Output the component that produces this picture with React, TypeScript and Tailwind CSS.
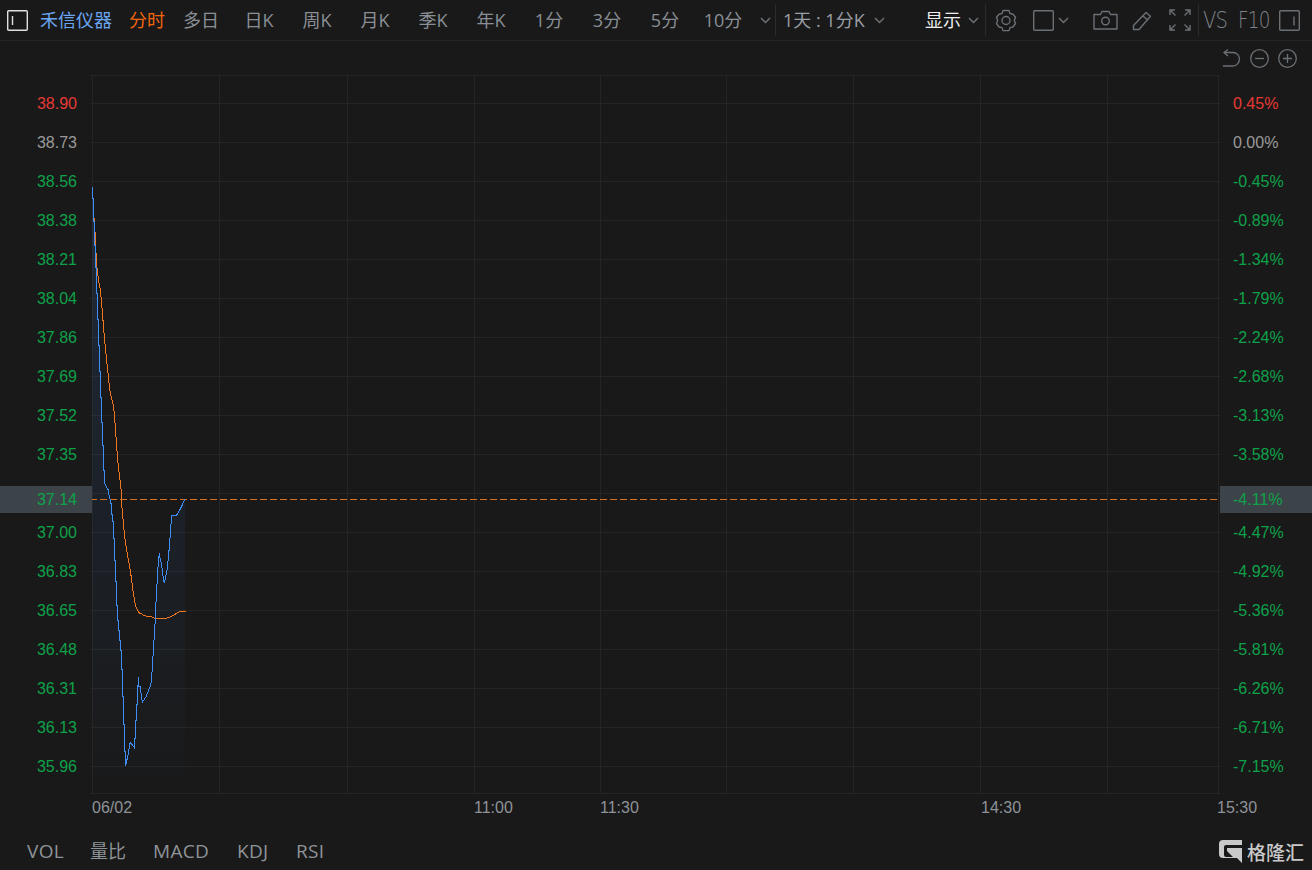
const LEFT: [string, string][] = [
  ['38.90', 'text-[#e53935]'], ['38.73', 'text-[#9a9a9a]'], ['38.56', 'text-[#0fa14a]'], ['38.38', 'text-[#0fa14a]'],
  ['38.21', 'text-[#0fa14a]'], ['38.04', 'text-[#0fa14a]'], ['37.86', 'text-[#0fa14a]'], ['37.69', 'text-[#0fa14a]'],
  ['37.52', 'text-[#0fa14a]'], ['37.35', 'text-[#0fa14a]'], ['', ''], ['37.00', 'text-[#0fa14a]'],
  ['36.83', 'text-[#0fa14a]'], ['36.65', 'text-[#0fa14a]'], ['36.48', 'text-[#0fa14a]'], ['36.31', 'text-[#0fa14a]'],
  ['36.13', 'text-[#0fa14a]'], ['35.96', 'text-[#0fa14a]'],
];
const RIGHT: [string, string][] = [
  ['0.45%', 'text-[#e53935]'], ['0.00%', 'text-[#9a9a9a]'], ['-0.45%', 'text-[#0fa14a]'], ['-0.89%', 'text-[#0fa14a]'],
  ['-1.34%', 'text-[#0fa14a]'], ['-1.79%', 'text-[#0fa14a]'], ['-2.24%', 'text-[#0fa14a]'], ['-2.68%', 'text-[#0fa14a]'],
  ['-3.13%', 'text-[#0fa14a]'], ['-3.58%', 'text-[#0fa14a]'], ['', ''], ['-4.47%', 'text-[#0fa14a]'],
  ['-4.92%', 'text-[#0fa14a]'], ['-5.36%', 'text-[#0fa14a]'], ['-5.81%', 'text-[#0fa14a]'], ['-6.26%', 'text-[#0fa14a]'],
  ['-6.71%', 'text-[#0fa14a]'], ['-7.15%', 'text-[#0fa14a]'],
];
const TABS = ['多日', '日K', '周K', '月K', '季K', '年K', '1分', '3分', '5分', '10分'];
const VX = [92, 219, 347, 474, 600, 726, 853, 980, 1107, 1218];
const HY = [75, 103, 142, 181, 220, 259, 298, 337, 376, 415, 454, 493, 532, 571, 610, 649, 688, 727, 766, 793];

const blueTop = [[37,52],[37,85],[40,85],[40,155],[43,155],[43,225],[46,225],[46,293],[49,293],[49,370],[52,370],[52,447],[55,447],[55,527],[58,527],[58,605],[61,605],[61,683],[64,683],[64,756],[67,756],[67,827],[70,827],[70,900],[73,900],[74,940],[79,950],[85,960],[88,980]];
const blueBot = [[91,30],[94,45],[94,72],[97,72],[97,95],[100,95],[100,145],[103,145],[103,210],[106,210],[106,275],[109,275],[109,345],[112,345],[112,390],[115,390],[115,420],[118,420],[118,450],[121,450],[121,480],[124,480],[124,537],[127,537],[127,620],[130,620],[130,702],[133,702],[133,785],[136,785],[137,828],[139,818],[142,805],[145,790],[148,770],[151,757],[157,765],[163,773],[164,745],[167,745],[167,692],[170,692],[170,642],[172,642],[172,587],[175,587],[175,562],[177,590],[181,590],[183,610],[187,637],[192,630],[198,620],[204,605],[210,590],[213,580],[215,560],[218,513],[221,465],[224,418],[226,385],[229,318],[232,267],[235,215],[238,190],[240,205],[244,220],[247,240],[250,265],[253,280],[256,265],[259,250],[262,235],[265,205],[268,172],[271,132],[275,75],[290,75],[296,65],[302,55],[308,42],[315,28]];
const orangeTop = [[40,145],[43,145],[46,205],[49,265],[52,305],[55,325],[58,343],[61,360],[64,388],[67,425],[70,462],[73,498],[76,530],[79,560],[82,590],[85,618],[88,648],[91,670],[94,682],[97,693],[100,705],[103,730],[106,770],[109,812],[112,855],[115,888],[118,912],[121,938],[124,963]];
const orangeBot = [[124,28],[127,65],[130,95],[133,130],[136,155],[139,175],[142,190],[145,208],[148,225],[151,243],[154,262],[157,288],[160,310],[163,327],[166,345],[169,352],[175,365],[180,370],[185,372],[190,375],[198,378],[215,380],[222,384],[260,384],[270,381],[280,376],[290,370],[300,365],[318,364]];
const conv = (a: number[][], oy: number) => a.map(([x, y]) => [80 + x / 3, oy + y / 3]);
const blue = [...conv(blueTop, 170), ...conv(blueBot, 490)];
const orange = [...conv(orangeTop, 170), ...conv(orangeBot, 490)];
const str = (p: number[][]) => p.map(([x, y]) => `${x.toFixed(1)},${y.toFixed(1)}`).join(' ');

function Chev({ cls = '' }: { cls?: string }) {
  return (
    <svg width="11" height="7" viewBox="0 0 11 7" fill="none" stroke="#6b7075" strokeWidth="1.5" className={`shrink-0 ${cls}`}>
      <path d="M1 1l4.5 4.500L10 1" />
    </svg>
  );
}
function Panel({ left }: { left: boolean }) {
  return (
    <svg width="21" height="21" viewBox="0 0 21 21" fill="none" stroke={left ? '#e0e0e0' : '#6b7075'} strokeWidth="1.4" className="shrink-0">
      <rect x="0.7" y="0.7" width="19.600" height="19.600" rx="1" />
      <path d={left ? 'M5.500 6v9' : 'M15 6.500v9'} />
    </svg>
  );
}

export default function App() {
  return (
    <div className="w-[1312px] h-[870px] bg-[#191919] flex flex-col overflow-hidden font-['Liberation_Sans','Noto_Sans_CJK_SC',sans-serif]">
      <header className="h-[41px] shrink-0 border-b border-[#252525] flex items-center pl-[7px] text-[18px] text-[#8a8f96] font-['Open_Sans','Noto_Sans_CJK_SC',sans-serif]">
        <Panel left />
        <span className="ml-[12px] pt-[1px] w-[73px] shrink-0 whitespace-nowrap text-[#6aa5f0]">禾信仪器</span>
        <span className="ml-[16px] pt-[1px] w-[36px] shrink-0 whitespace-nowrap text-[#f0660f]">分时</span>
        <div className="ml-[7px] pt-[1px] flex items-center shrink-0">
          {TABS.map((t) => (
            <span key={t} className="whitespace-nowrap w-[58px] text-center">{t}</span>
          ))}
        </div>
        <Chev cls="ml-[8px]" />
        <div className="w-px h-[32px] shrink-0 bg-[#2c2c2c] ml-[4px]" />
        <span className="ml-[7px] pt-[1px] w-[83px] shrink-0 whitespace-nowrap text-[#9a9fa5]">1天 : 1分K</span>
        <Chev cls="ml-[8px]" />
        <span className="ml-[40px] pt-[1px] w-[37px] shrink-0 whitespace-nowrap text-[#ededed]">显示</span>
        <Chev cls="ml-[6px]" />
        <div className="w-px h-[32px] shrink-0 bg-[#2c2c2c] ml-[6px]" />
        <svg className="ml-[9px] shrink-0" width="22" height="23" viewBox="0 0 22 23" fill="none" stroke="#6b7075" strokeWidth="1.4">
          <path d="M8 1.500h6l1 3 3 .7 2.500 3-1.200 3.300 1.200 3-2.500 3.500-3 .6-1 3H8l-1-3-3-.6-2.500-3.500 1.200-3-1.200-3.300 2.500-3 3-.7z" strokeLinejoin="round" />
          <circle cx="11" cy="11.500" r="4" />
        </svg>
        <svg className="ml-[16px] shrink-0" width="21" height="21" viewBox="0 0 21 21" fill="none" stroke="#6b7075" strokeWidth="1.4">
          <rect x="0.7" y="0.7" width="19.600" height="19.600" rx="1" />
        </svg>
        <Chev cls="ml-[4px]" />
        <svg className="ml-[24px] shrink-0" width="25" height="20" viewBox="0 0 25 20" fill="none" stroke="#6b7075" strokeWidth="1.4">
          <path d="M1 4.500h6.500l1.500-3h7l1.500 3H24v14.500H1z" strokeLinejoin="round" />
          <circle cx="12.500" cy="11" r="3.800" />
        </svg>
        <svg className="ml-[14px] shrink-0" width="21" height="21" viewBox="0 0 21 21" fill="none" stroke="#6b7075" strokeWidth="1.4">
          <path d="M1.500 15.500L14 2.500l4.500 3.800L7 19.500l-5.500 0z" strokeLinejoin="round" />
          <path d="M11 6l5 4.300" />
        </svg>
        <svg className="ml-[16px] shrink-0" width="22" height="22" viewBox="0 0 22 22" fill="none" stroke="#6b7075" strokeWidth="1.4">
          <path d="M1 6V1h5M16 1h5v5M1 16v5h5M16 21h5v-5M1.500 1.500l5 5M20.500 1.500l-5 5M1.500 20.500l5-5M20.500 20.500l-5-5" />
        </svg>
        <div className="w-px h-[32px] shrink-0 bg-[#2c2c2c] ml-[7px]" />
        <span className="ml-[4px] w-[26px] shrink-0 whitespace-nowrap text-[23px] leading-none text-[#7f848a] font-['DejaVu_Sans',sans-serif] font-extralight tracking-[-1px] scale-x-[0.85] origin-left">VS</span>
        <span className="ml-[9px] w-[32px] shrink-0 whitespace-nowrap text-[23px] leading-none text-[#7f848a] font-['DejaVu_Sans',sans-serif] font-extralight tracking-[-1px] scale-x-[0.8] origin-left">F10</span>
        <span className="ml-[9px] flex shrink-0"><Panel left={false} /></span>
      </header>

      <div className="h-[34px] shrink-0 flex items-center justify-end gap-[7px] pr-[14px]">
        <svg width="21" height="21" viewBox="0 0 21 21" fill="none" stroke="#6b7075" strokeWidth="1.3">
          <path d="M7 1.500L3 4.500l4 3.500M3 4.500h9c3.500 0 6.500 2.800 6.500 6.500s-3 7-6.500 7H2" />
        </svg>
        <svg width="21" height="21" viewBox="0 0 21 21" fill="none" stroke="#6b7075" strokeWidth="1.3">
          <circle cx="10.500" cy="10.500" r="8.800" /><path d="M6 10.500h9" />
        </svg>
        <svg width="21" height="21" viewBox="0 0 21 21" fill="none" stroke="#6b7075" strokeWidth="1.3">
          <circle cx="10.500" cy="10.500" r="8.800" /><path d="M6 10.500h9M10.500 6v9" />
        </svg>
      </div>

      <div className="relative flex h-[718px] shrink-0">
        <div className="w-[92px] shrink-0 pt-[9px] pr-[15px] text-[16px] text-right">
          {LEFT.map(([t, c], i) => (
            <div key={i} className={`h-[39px] leading-[39px] ${c}`}>{t}</div>
          ))}
        </div>
        <div className="relative w-[1128px] shrink-0">
          <svg className="absolute -left-[92px] -top-[75px]" width="1312" height="800" shapeRendering="crispEdges">
            {VX.map((x) => <line key={x} x1={x + 0.5} x2={x + 0.5} y1={75} y2={794} stroke="#252525" />)}
            {HY.map((y) => <line key={y} x1={90} x2={1220} y1={y + 0.5} y2={y + 0.5} stroke="#252525" />)}
          </svg>
          <svg className="absolute -left-[92px] -top-[75px]" width="1312" height="800">
            <defs>
              <linearGradient id="af" x1="0" y1="0" x2="0" y2="1">
                <stop offset="0" stopColor="#3c7fe0" stopOpacity="0.16" />
                <stop offset="1" stopColor="#3c7fe0" stopOpacity="0.01" />
              </linearGradient>
            </defs>
            <polygon points={`92.300,187 ${str(blue)} 185,775 92.300,775`} fill="url(#af)" />
            <line x1="0" x2="1218" y1="499.500" y2="499.500" stroke="#d9701f" strokeDasharray="7 3" shapeRendering="crispEdges" />
            <polyline points={str(orange)} fill="none" stroke="#f0761e" strokeWidth="1" shapeRendering="crispEdges" />
            <polyline points={str(blue)} fill="none" stroke="#3f8ef5" strokeWidth="1" shapeRendering="crispEdges" />
          </svg>
        </div>
        <div className="w-[92px] shrink-0 pt-[9px] pl-[13px] text-[16px]">
          {RIGHT.map(([t, c], i) => (
            <div key={i} className={`h-[39px] leading-[39px] ${c}`}>{t}</div>
          ))}
        </div>
        <div className="absolute left-0 top-[411px] w-[92px] h-[27px] bg-[#3c4449] pr-[15px] text-right text-[16px] leading-[27px] text-[#0fa14a]">37.14</div>
        <div className="absolute left-[1220px] top-[411px] w-[92px] h-[27px] bg-[#3c4449] pl-[13px] text-[16px] leading-[27px] text-[#0fa14a]">-4.11%</div>
      </div>

      <div className="h-[28px] shrink-0 pt-[1px] text-[16px] text-[#8e9398] flex items-center">
        <span className="ml-[92px] w-[382px] shrink-0">06/02</span>
        <span className="w-[126px] shrink-0">11:00</span>
        <span className="w-[381px] shrink-0">11:30</span>
        <span className="w-[236px] shrink-0">14:30</span>
        <span className="whitespace-nowrap">15:30</span>
      </div>

      <div className="flex-1 flex items-center pt-[12px] text-[19px] tracking-[0.3px] text-[#8e9398] font-['Open_Sans','Noto_Sans_CJK_SC',sans-serif]">
        <span className="ml-[27px] w-[63px] shrink-0">VOL</span>
        <span className="w-[63px] shrink-0 text-[18px] tracking-normal">量比</span>
        <span className="w-[84px] shrink-0">MACD</span>
        <span className="w-[59px] shrink-0">KDJ</span>
        <span>RSI</span>
        <div className="ml-auto mr-[8px] flex items-center gap-[5px]">
          <svg width="23" height="23" viewBox="0 0 23 23" className="shrink-0">
            <path d="M4 0h19v5H7a2 2 0 0 0-2 2v8a2 2 0 0 0 2 2h7l-6-6V8h15v15l-5-5H4a4 4 0 0 1-4-4V4a4 4 0 0 1 4-4z" fill="#c9c9c9" />
          </svg>
          <span className="text-[19px] leading-none tracking-normal text-[#c9c9c9] font-['Noto_Sans_CJK_SC',sans-serif] font-medium whitespace-nowrap">格隆汇</span>
        </div>
      </div>
    </div>
  );
}
